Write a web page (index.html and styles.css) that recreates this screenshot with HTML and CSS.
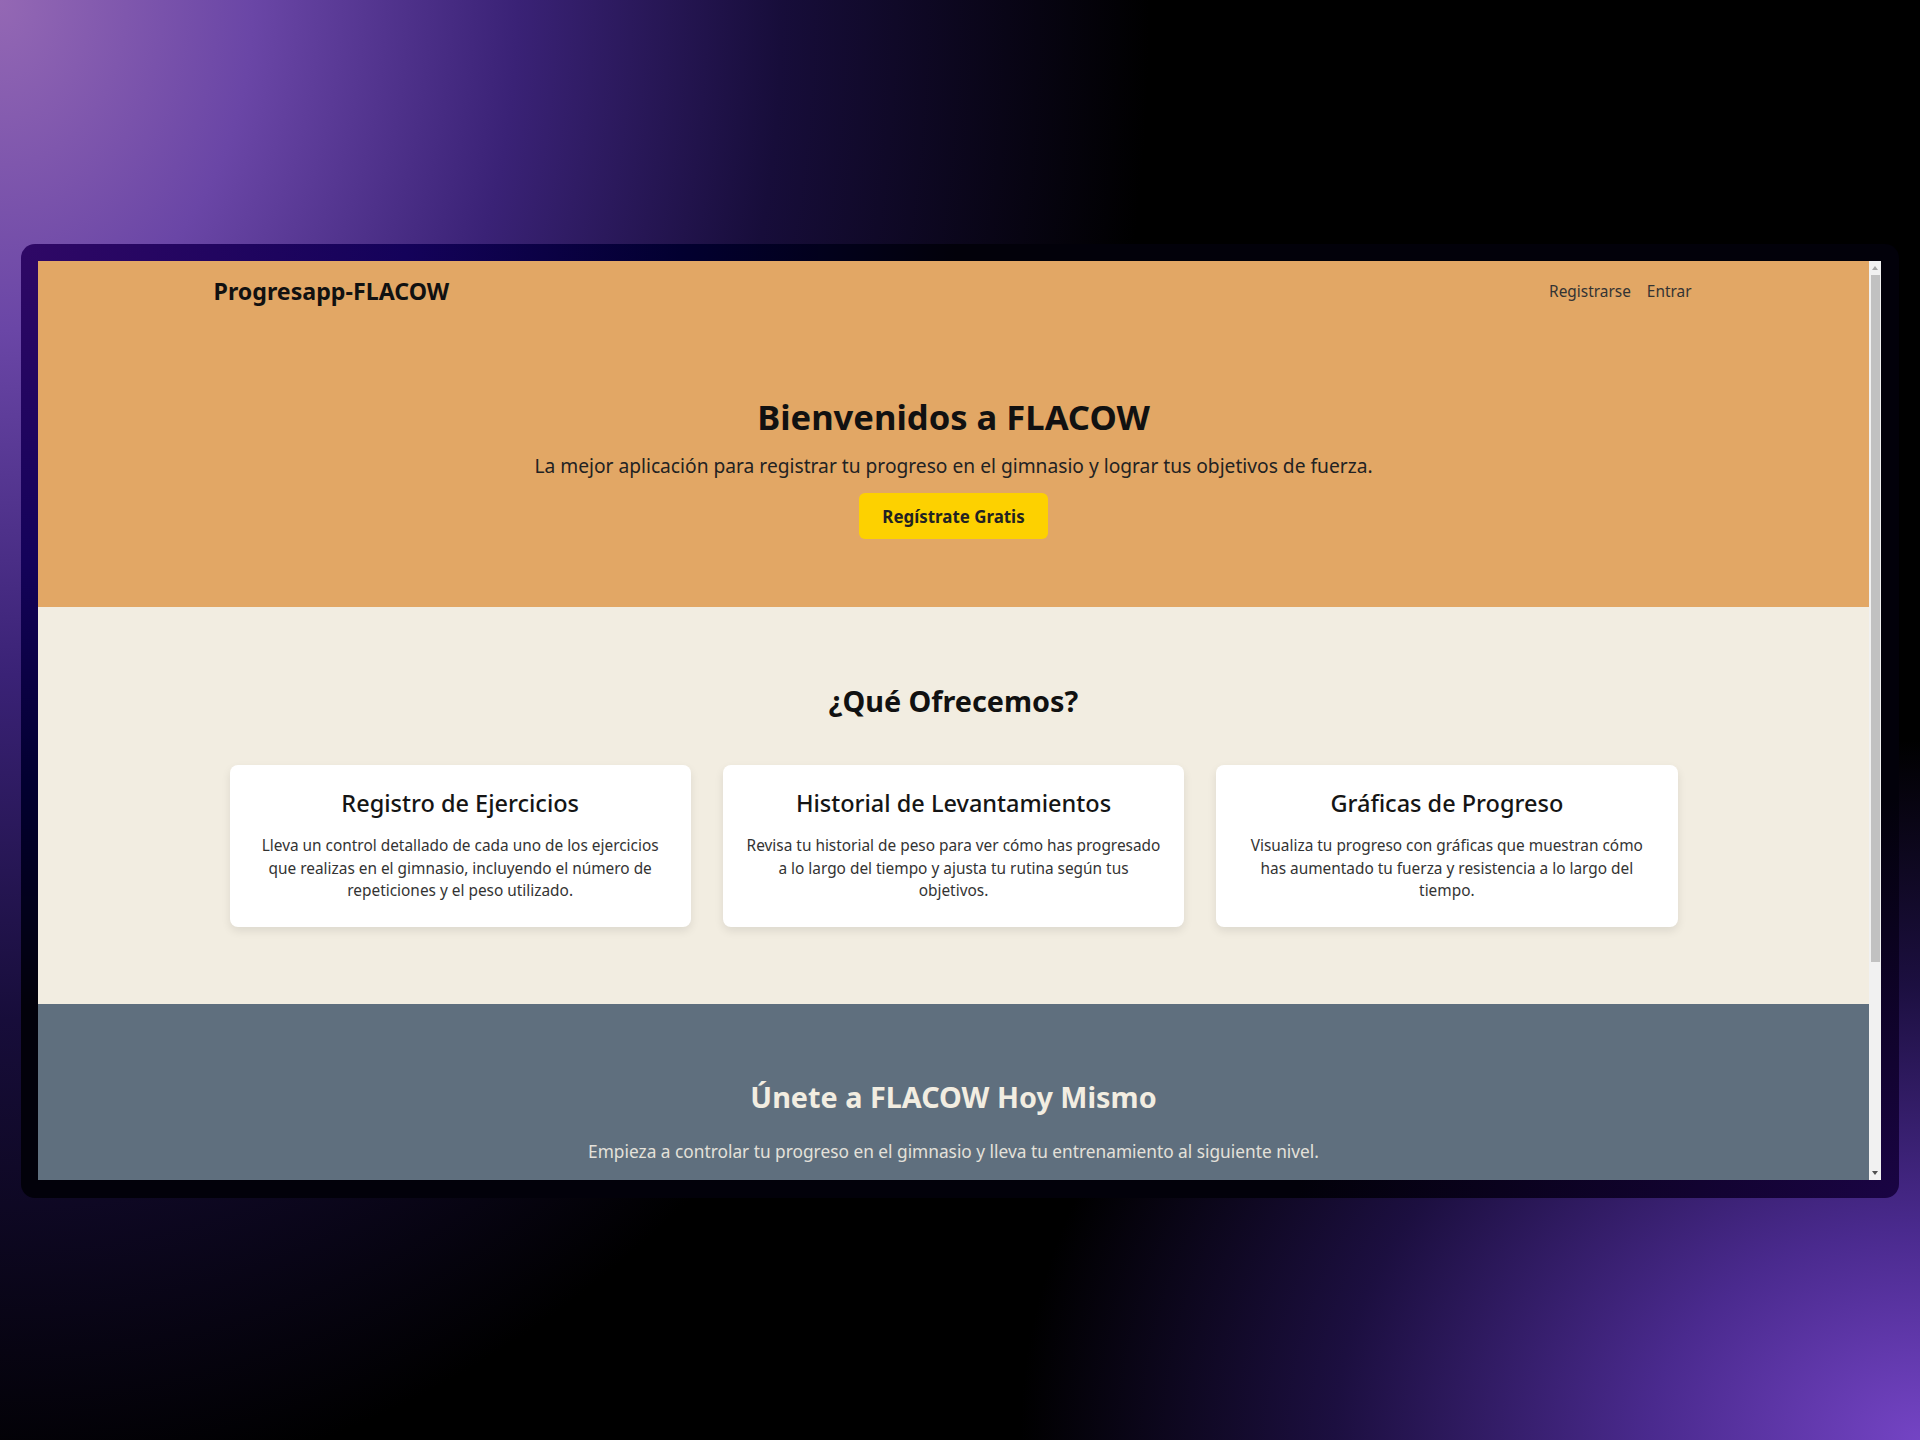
FILE: index.html
```html
<!DOCTYPE html>
<html lang="es">
<head>
<meta charset="utf-8">
<title>Progresapp-FLACOW</title>
<link rel="stylesheet" href="styles.css">
</head>
<body>
<div class="stage">
  <div class="frame">
    <div class="viewport">
      <div class="page">
        <section class="hero-wrap">
          <header class="topbar">
            <div class="logo">Progresapp-FLACOW</div>
            <nav class="nav">
              <a href="#">Registrarse</a>
              <a href="#">Entrar</a>
            </nav>
          </header>
          <div class="hero">
            <h1>Bienvenidos a FLACOW</h1>
            <p>La mejor aplicación para registrar tu progreso en el gimnasio y lograr tus objetivos de fuerza.</p>
            <a class="btn" href="#">Regístrate Gratis</a>
          </div>
        </section>
        <section class="features">
          <h2>¿Qué Ofrecemos?</h2>
          <div class="cards">
            <div class="card">
              <h3>Registro de Ejercicios</h3>
              <p>Lleva un control detallado de cada uno de los ejercicios que realizas en el gimnasio, incluyendo el número de repeticiones y el peso utilizado.</p>
            </div>
            <div class="card">
              <h3>Historial de Levantamientos</h3>
              <p>Revisa tu historial de peso para ver cómo has progresado a lo largo del tiempo y ajusta tu rutina según tus objetivos.</p>
            </div>
            <div class="card">
              <h3>Gráficas de Progreso</h3>
              <p>Visualiza tu progreso con gráficas que muestran cómo has aumentado tu fuerza y resistencia a lo largo del tiempo.</p>
            </div>
          </div>
        </section>
        <section class="cta">
          <h2>Únete a FLACOW Hoy Mismo</h2>
          <p>Empieza a controlar tu progreso en el gimnasio y lleva tu entrenamiento al siguiente nivel.</p>
        </section>
      </div>
      <div class="scrollbar">
        <div class="arrow up"></div>
        <div class="track"><div class="thumb"></div></div>
        <div class="arrow down"></div>
      </div>
    </div>
  </div>
</div>
</body>
</html>
```
FILE: styles.css
```css
* { box-sizing: border-box; }

html, body {
  margin: 0;
  padding: 0;
}

body {
  width: 1920px;
  height: 1440px;
  overflow: hidden;
  font-family: "Noto Sans", "Open Sans", sans-serif;
  background:
    radial-gradient(ellipse 1150px 1500px at 0 0, #9468b4 0%, #6a46a6 22%, #3a2276 45%, #170d3a 68%, rgba(0,0,0,0) 100%),
    radial-gradient(ellipse 900px 700px at 100% 100%, #7444c4 0%, #4a2a8e 30%, #1c0f40 65%, rgba(0,0,0,0) 100%),
    #000;
}

.stage {
  padding: 244px 21px 0 21px;
}

.frame {
  width: 1878px;
  height: 954px;
  padding: 17px 18px 18px 17px;
  border-radius: 14px;
  background:
    radial-gradient(ellipse 1100px 900px at 0 0, #2f0866 0%, #14025a 35%, #020030 60%, rgba(0,0,0,0) 85%),
    radial-gradient(ellipse 600px 400px at 100% 100%, #1a0444 0%, rgba(0,0,0,0) 100%),
    #02010a;
}

.viewport {
  display: flex;
  width: 1843px;
  height: 919px;
  overflow: hidden;
}

.page {
  flex: 1;
  overflow: hidden;
  background: #f2ede1;
}

/* Scrollbar */
.scrollbar {
  width: 12px;
  display: flex;
  flex-direction: column;
  background: #f1f1f1;
}
.arrow {
  height: 14px;
  display: flex;
  align-items: center;
  justify-content: center;
}
.arrow::before {
  content: "";
  width: 0;
  height: 0;
  border-left: 3.5px solid transparent;
  border-right: 3.5px solid transparent;
}
.arrow.up::before { border-bottom: 4px solid #a3a3a3; }
.arrow.down::before { border-top: 4px solid #505050; }
.track {
  flex: 1;
  padding: 0 1px 0 2px;
}
.thumb {
  height: 687px;
  background: #c1c1c1;
}

/* Hero */
.hero-wrap {
  background: #e2a765;
}
.topbar {
  max-width: 1480px;
  margin: 0 auto;
  padding: 14px 0;
  display: flex;
  align-items: center;
  justify-content: space-between;
}
.logo {
  font-size: 23.2px;
  font-weight: 700;
  color: #111;
}
.nav {
  display: flex;
  gap: 16px;
  padding-right: 2px;
}
.nav a {
  font-size: 15.4px;
  color: #333;
  text-decoration: none;
}

.hero {
  text-align: center;
  padding: 72px 0 68px;
}
.hero h1 {
  margin: 0 0 12px;
  font-size: 34.6px;
  font-weight: 700;
  color: #111;
}
.hero p {
  margin: 0 0 14px;
  font-size: 19.2px;
  color: #222;
}
.btn {
  display: inline-block;
  padding: 11.5px 23.5px;
  border-radius: 6px;
  background: #fdd100;
  color: #222;
  font-size: 16.9px;
  line-height: 23px;
  font-weight: 700;
  text-decoration: none;
}

/* Features */
.features {
  padding: 74px 0 77px;
  text-align: center;
}
.features h2 {
  margin: 0 0 45px;
  font-size: 28.8px;
  font-weight: 700;
  color: #111;
}
.cards {
  max-width: 1448px;
  margin: 0 auto;
  display: grid;
  grid-template-columns: repeat(3, 1fr);
  gap: 32px;
}
.card {
  background: #fff;
  border-radius: 8px;
  padding: 22px 22px 24px;
  box-shadow: 0 4px 10px rgba(0, 0, 0, 0.09);
}
.card h3 {
  margin: 0 0 16px;
  font-size: 23.5px;
  font-weight: 500;
  color: #151515;
}
.card p {
  margin: 0;
  font-size: 15.4px;
  line-height: 22.5px;
  color: #333;
}

/* CTA */
.cta {
  background: #5f6f7e;
  text-align: center;
  padding: 73px 0 80px;
}
.cta h2 {
  margin: 0 0 24px;
  font-size: 28.8px;
  font-weight: 700;
  color: #f2ede1;
}
.cta p {
  margin: 0;
  font-size: 17.3px;
  color: #e4e1da;
}
```
